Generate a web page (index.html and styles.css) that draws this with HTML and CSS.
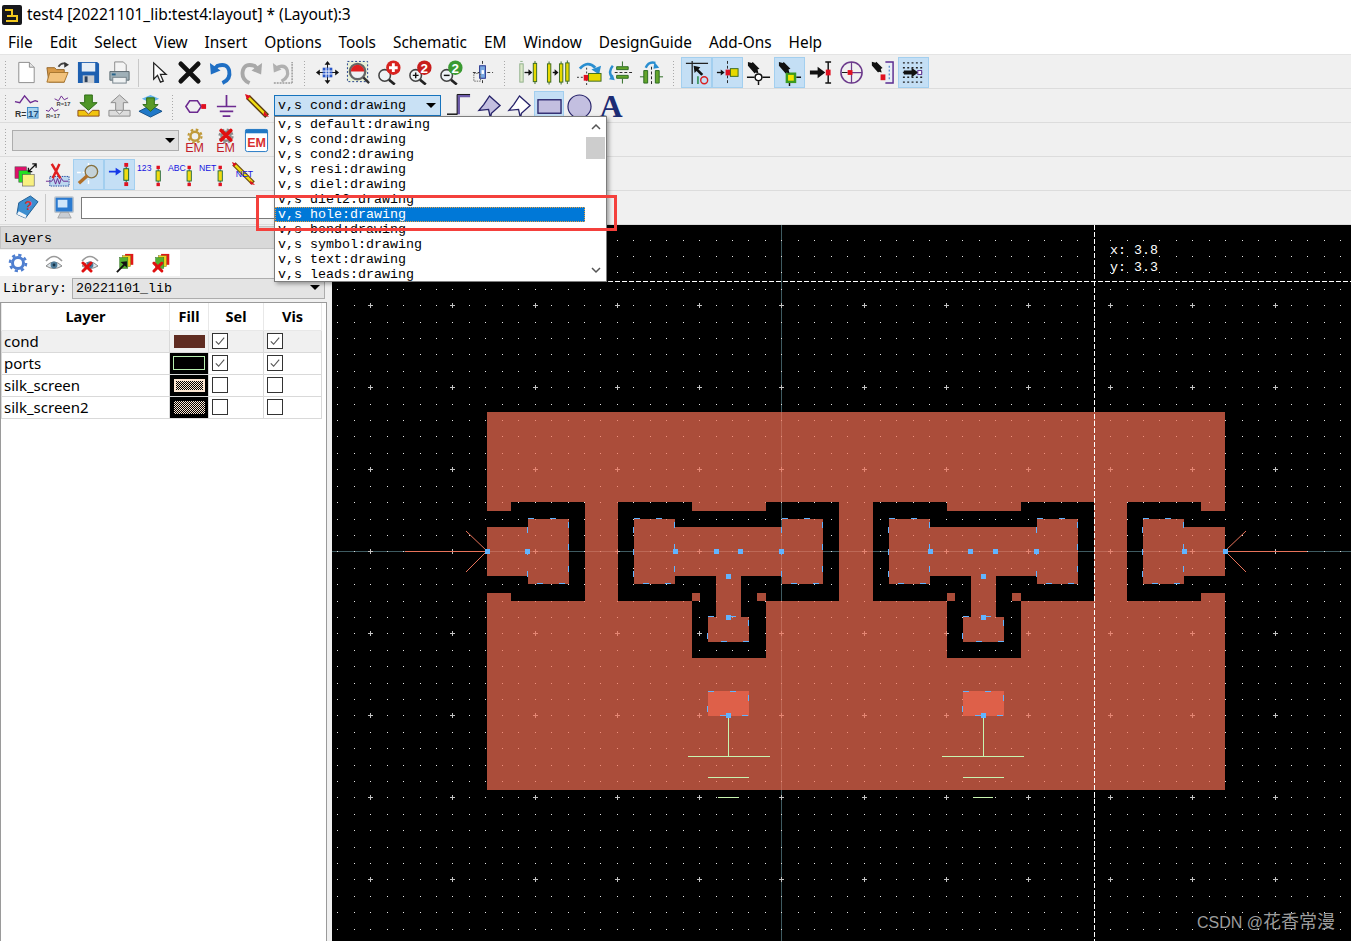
FILE: index.html
```html
<!DOCTYPE html>
<html lang="en">
<head>
<meta charset="utf-8">
<title>test4 layout</title>
<link rel="stylesheet" href="styles.css">
</head>
<body>
<svg class="defs" width="0" height="0" aria-hidden="true">
  <defs>
    <symbol id="mag" viewBox="0 0 26 26"><circle cx="8" cy="16" r="6" fill="#eef3f6" stroke="#444" stroke-width="1.600"/><path d="M12.500 20.500l6 5" stroke="#222" stroke-width="2.800"/></symbol>
    <symbol id="rpin" viewBox="0 0 10 26"><rect x="3" y="1" width="4" height="4" fill="#e01020"/><rect x="3" y="21" width="4" height="4" fill="#e01020"/><rect x="2.500" y="7" width="5" height="12" fill="#f0dc10" stroke="#17603a"/><path d="M5 5v2M5 19v2" stroke="#17603a"/></symbol>
    <symbol id="gear" viewBox="0 0 20 20"><circle cx="10" cy="10" r="5.500" fill="none" stroke="currentColor" stroke-width="3"/><circle cx="10" cy="10" r="8" fill="none" stroke="currentColor" stroke-width="2.600" stroke-dasharray="3.200 3.080"/></symbol>
    <symbol id="blackarrow" viewBox="0 0 14 14"><path d="M1 1l4 1 1-1 7 7-2 1 1 4-3-1-1 1-7-8z" fill="#111"/></symbol>
    <symbol id="stack" viewBox="0 0 22 22"><rect x="10" y="1" width="9" height="12" fill="#e01818"/><rect x="7" y="3" width="9" height="12" fill="#f0d020" stroke="#7a7a20" stroke-width=".5"/><rect x="4" y="5" width="9" height="12" fill="#52b030" stroke="#2a6a20" stroke-width=".5"/></symbol>
    <symbol id="eye" viewBox="0 0 20 20"><path d="M2 8q8-9 16 0" fill="none" stroke="#9a9a9a" stroke-width="1.600"/><path d="M2 13q8-8 16 0q-8 5-16 0z" fill="#dfe6ea" stroke="#8a8a8a"/><circle cx="10" cy="12" r="3.400" fill="#4f7d9c"/><circle cx="10" cy="12" r="1.400" fill="#17354a"/></symbol>
    <symbol id="redx" viewBox="0 0 12 12"><path d="M2 2l8 8M10 2l-8 8" stroke="#e01010" stroke-width="3" stroke-linecap="round"/></symbol>
  </defs>
</svg>

<header class="titlebar">
  <svg class="appicon" width="20" height="20" viewBox="0 0 20 20"><rect width="20" height="20" rx="2" fill="#17181c"/><path d="M3 5h7v5M5 11h10v5H4" fill="none" stroke="#f2c81e" stroke-width="2"/></svg>
  <span class="titletext">test4 [20221101_lib:test4:layout] * (Layout):3</span>
</header>

<nav class="menubar">
  <span>File</span><span>Edit</span><span>Select</span><span>View</span><span>Insert</span><span>Options</span><span>Tools</span><span>Schematic</span><span>EM</span><span>Window</span><span>DesignGuide</span><span>Add-Ons</span><span>Help</span>
</nav>

<section class="tb tb-first">
  <i class="grip"></i>
  <b class="btn"><svg viewBox="0 0 26 26"><path d="M5 2.500h11l5 5v16H5z" fill="#fff" stroke="#8d8d8d"/><path d="M16 2.500v5h5" fill="#e4e4e4" stroke="#8d8d8d"/></svg></b>
  <b class="btn"><svg viewBox="0 0 26 26"><path d="M2 8h8l2 2h8v13H4z" fill="#d89a48" stroke="#96672a"/><path d="M2 23l3-10h19l-4 10z" fill="#f2c27c" stroke="#a8762f"/><path d="M14 7q3-5 8-3" fill="none" stroke="#444" stroke-width="1.800"/><path d="M25 5l-5 3 0-6z" fill="#333"/></svg></b>
  <b class="btn"><svg viewBox="0 0 26 26"><path d="M2 2h20l2 2v20H2z" fill="#1d5fb0"/><rect x="6" y="3" width="14" height="9" fill="#e6eef6"/><rect x="7" y="16" width="12" height="8" fill="#c9ccd0"/><rect x="9" y="17" width="3" height="6" fill="#2b3f5c"/></svg></b>
  <b class="btn"><svg viewBox="0 0 26 26"><path d="M8 2h9l3 3v8H8z" fill="#f4f4f4" stroke="#8a8a8a"/><path d="M3 12h20v9H3z" fill="#9fb0b8" stroke="#5d6b72"/><rect x="6" y="18" width="14" height="6" fill="#eef1f2" stroke="#75828a"/><path d="M5 15h4" stroke="#28648a" stroke-width="2"/></svg></b>
  <i class="sep"></i>
  <b class="btn"><svg viewBox="0 0 26 26"><path d="M8 3v17l4-4 3 7 3-1-3-7h6z" fill="#fff" stroke="#222" stroke-width="1.300"/></svg></b>
  <b class="btn"><svg viewBox="0 0 26 26"><path d="M4 4l18 18M22 4L4 22" stroke="#111" stroke-width="5" stroke-linecap="round"/></svg></b>
  <b class="btn"><svg viewBox="0 0 26 26"><path d="M15 24q9-4 7-13-2-8-12-5l-3 3" fill="none" stroke="#1f6fc4" stroke-width="4"/><path d="M2 3l1 12 10-4z" fill="#1f6fc4"/></svg></b>
  <b class="btn"><svg viewBox="0 0 26 26"><path d="M11 24q-9-4-7-13 2-8 12-5l3 3" fill="none" stroke="#a8a8a8" stroke-width="4"/><path d="M24 3l-1 12-10-4z" fill="#a8a8a8"/></svg></b>
  <b class="btn"><svg viewBox="0 0 26 26"><path d="M4 24h19M23 24V2" stroke="#999" stroke-width="1.500" stroke-dasharray="2 1"/><path d="M12 22q8-4 6-11-2-6-9-4l-2 2" fill="none" stroke="#b0b0b0" stroke-width="3.400"/><path d="M3 3l1 10 8-3z" fill="#b0b0b0"/></svg></b>
  <i class="grip wide"></i>
  <b class="btn"><svg viewBox="0 0 26 26"><path d="M13 1l3 4h-6zM13 25l3-4h-6zM1 13l4-3v6zM25 13l-4-3v6z" fill="#111"/><path d="M13 4v18M4 13h18" stroke="#111"/><rect x="8" y="8" width="10" height="10" fill="#2a57c8"/><path d="M11.500 8v10M14.500 8v10M8 11.500h10M8 14.500h10" stroke="#fff"/></svg></b>
  <b class="btn"><svg viewBox="0 0 26 26"><rect x="1.500" y="1.500" width="21" height="21" fill="#e8efd8" stroke="#23408c" stroke-dasharray="2 2"/><circle cx="12" cy="12" r="8" fill="#eef1f3" stroke="#666" stroke-width="2.400"/><path d="M12 5v7H5a7 7 0 0 1 7-7zM12 5a7 7 0 0 1 7 7h-7z" fill="#e02020"/><path d="M18 18l6 6" stroke="#333" stroke-width="2.500"/></svg></b>
  <b class="btn"><svg viewBox="0 0 26 26"><use href="#mag" width="26" height="26"/><circle cx="17" cy="8" r="7.500" fill="#d8221f"/><path d="M17 3.500v9M12.500 8h9" stroke="#fff" stroke-width="3"/></svg></b>
  <b class="btn"><svg viewBox="0 0 26 26"><use href="#mag" width="26" height="26"/><path d="M5 16h6M8 13v6" stroke="#111" stroke-width="1.500"/><circle cx="17" cy="8" r="7.500" fill="#c81c1c"/><text class="ico-num" x="17" y="13">2</text></svg></b>
  <b class="btn"><svg viewBox="0 0 26 26"><use href="#mag" width="26" height="26"/><path d="M5 16h6" stroke="#111" stroke-width="1.500"/><circle cx="17" cy="8" r="7.500" fill="#3a9a32"/><text class="ico-num" x="17" y="13">2</text></svg></b>
  <b class="btn"><svg viewBox="0 0 26 26"><path d="M13 1v24M3 13h21" stroke="#333" stroke-dasharray="3 2"/><rect x="10" y="6" width="6" height="13" fill="#7aa8e0" stroke="#22308c"/><rect x="12" y="10.500" width="2.500" height="4" fill="#fff"/><rect x="4" y="14" width="7" height="8" fill="none" stroke="#666" stroke-dasharray="1.500 1"/></svg></b>
  <i class="grip wide"></i>
  <b class="btn"><svg viewBox="0 0 26 26"><rect x="5" y="4" width="3.500" height="19" fill="#dce8c8" stroke="#8fb08a"/><path d="M5.500 1.500h2.500M10 13h5" stroke="#8fb08a"/><path d="M10 13h6" stroke="#111" stroke-width="1.400"/><path d="M18 13l-4-3.500v7z" fill="#111"/><rect x="19" y="3.500" width="3.500" height="19" fill="#e7d900" stroke="#3a6a20"/><path d="M20.800 1v2.500M20.800 22.500V25" stroke="#3a6a20"/></svg></b>
  <b class="btn"><svg viewBox="0 0 26 26"><rect x="1.500" y="4" width="3.500" height="19" fill="#e7d900" stroke="#3a6a20"/><path d="M7 13h4" stroke="#111" stroke-width="1.400"/><path d="M13 13l-4-3.500v7z" fill="#111"/><rect x="14" y="4" width="3.500" height="19" fill="#e7d900" stroke="#3a6a20"/><rect x="20.500" y="3" width="3.500" height="19" fill="#e7d900" stroke="#3a6a20"/><path d="M3.200 1.500V4M15.700 1.500V4M22.200 .5V3M3.200 23v2.500M15.700 23v2.500M22.200 22v3" stroke="#3a6a20"/></svg></b>
  <b class="btn"><svg viewBox="0 0 26 26"><path d="M3 9q8-9 16-1" fill="none" stroke="#2a8ed0" stroke-width="3"/><path d="M25 6l-2 9-8-5z" fill="#2a8ed0"/><path d="M10 8v18M0 18h6" stroke="#333" stroke-dasharray="2 2"/><rect x="7" y="15.500" width="5" height="6" fill="#e01020"/><rect x="12" y="14" width="13" height="8" fill="#e7d900" stroke="#3a6a20"/></svg></b>
  <b class="btn"><svg viewBox="0 0 26 26"><path d="M5 6q-5 6-1 12" fill="none" stroke="#2a8ed0" stroke-width="2.600"/><path d="M7 21l-6-1 4-5z" fill="#2a8ed0"/><path d="M7 13h18" stroke="#222" stroke-dasharray="3 2"/><path d="M15 1.500V6.500M9 7h12v3H9zM15 24.500V19.500M9 16h12v3H9z" fill="#63a52a" stroke="#2a6a20"/></svg></b>
  <b class="btn"><svg viewBox="0 0 26 26"><path d="M7 8q3-7 10-5" fill="none" stroke="#2a8ed0" stroke-width="2.600"/><path d="M21 8l-6 1 1-7z" fill="#2a8ed0"/><path d="M13 7v19" stroke="#222" stroke-dasharray="3 2"/><path d="M5 11h4v13H5zM17 11h4v13h-4zM1 17.500h4M21 17.500h4" fill="#63a52a" stroke="#2a6a20"/></svg></b>
  <i class="grip wide"></i>
  <b class="btn on"><svg viewBox="0 0 26 26"><path d="M2 3.500h23M8.500 1v24" stroke="#222" stroke-width="1.300"/><path d="M10 6l7 1.500-2 2 5 5-2 2-5-5-2 2z" fill="#111"/><path d="M14.500 17v8" stroke="#2a8a4a" stroke-width="1.600"/><circle cx="21" cy="21" r="3.600" fill="none" stroke="#d82020" stroke-width="1.500"/></svg></b>
  <b class="btn on"><svg viewBox="0 0 26 26"><path d="M2 13h6" stroke="#111" stroke-width="1.400"/><path d="M10 13l-4-3v6z" fill="#111"/><path d="M13 1v24" stroke="#222" stroke-dasharray="3 2"/><rect x="11" y="10" width="5" height="6" fill="#e01020"/><rect x="16" y="9" width="8" height="8" fill="#e7d900" stroke="#3a6a20"/></svg></b>
  <b class="btn"><svg viewBox="0 0 26 26"><use href="#blackarrow" width="14" height="14" x="1" y="1"/><path d="M1 18h8M17 18h8M13 22v4" stroke="#111" stroke-width="1.500"/><circle cx="13" cy="18" r="3.500" fill="#fff" stroke="#111" stroke-width="1.500"/></svg></b>
  <b class="btn on"><svg viewBox="0 0 26 26"><path d="M13 24v3M20 18h5" stroke="#111" stroke-width="1.500"/><rect x="9" y="13" width="11" height="11" fill="#3a9a20"/><rect x="11.500" y="15.500" width="6" height="6" fill="#f2e400"/><use href="#blackarrow" width="14" height="14" x="1" y="1"/></svg></b>
  <b class="btn"><svg viewBox="0 0 26 26"><path d="M18 2h6M21 2v22M18 24h6" stroke="#111" stroke-width="1.500"/><path d="M2 11h8V7l8 6-8 6v-4H2z" fill="#111"/><rect x="18.500" y="10" width="5" height="6" fill="#e01020"/></svg></b>
  <b class="btn"><svg viewBox="0 0 26 26"><circle cx="13" cy="13" r="11" fill="none" stroke="#6c3a8c" stroke-width="1.600"/><path d="M13 2v22M13 13h11" stroke="#6c3a8c" stroke-width="1.300"/><path d="M3 13h6" stroke="#111"/><rect x="9" y="10.500" width="5" height="5" fill="#e01020"/></svg></b>
  <b class="btn"><svg viewBox="0 0 26 26"><use href="#blackarrow" width="13" height="13" x="1" y="1"/><rect x="11" y="15" width="6" height="6" fill="#e01020"/><path d="M16 2h8v22h-8" fill="#e9eef6" stroke="#5a2a90" stroke-width="1.500"/><path d="M20 6v14" stroke="#2a6ac0" stroke-dasharray="2 2"/></svg></b>
  <b class="btn on"><svg viewBox="0 0 26 26"><path d="M2 3h22M2 8h22M2 18h22M2 23h22" stroke="#222" stroke-width="1.500" stroke-dasharray="2 2.500"/><path d="M2 13h6M20 13h4" stroke="#222" stroke-width="1.500" stroke-dasharray="2 2.500"/><path d="M3 11h8V8l7 5-7 5v-3H3z" fill="#111"/><rect x="17.500" y="11" width="4" height="4" fill="#fff" stroke="#5a2a90"/></svg></b>
</section>

<section class="tb">
  <i class="grip"></i>
  <b class="btn"><svg viewBox="0 0 26 26"><path d="M1 8l5 1 5-7 6 7 5-2 3 1" fill="none" stroke="#6c2a90" stroke-width="1.400"/><rect x="14" y="14" width="11" height="11" fill="#a8d4f0" stroke="#3a86c6"/><text class="ico-r" x="1" y="24">R=</text><text class="ico-r17" x="14.500" y="24">17</text></svg></b>
  <b class="btn"><svg viewBox="0 0 26 26"><path d="M10 5l4 2 3-5 3 4 4-2" fill="none" stroke="#6c2a90"/><path d="M1 17l3 1 3-4 3 4 4-2" fill="none" stroke="#6c2a90"/><text class="ico-rs" x="12" y="12">R=17</text><text class="ico-rs" x="1" y="25">R=17</text></svg></b>
  <b class="btn"><svg viewBox="0 0 26 26"><path d="M9 1h8v8h5l-9 8-9-8h5z" fill="#4f9628" stroke="#2c6a14"/><path d="M2 17h7l4 4 4-4h7v6H2z" fill="#f1c40f" stroke="#8a4a18"/></svg></b>
  <b class="btn"><svg viewBox="0 0 26 26"><path d="M13 1l9 8h-5v8H9V9H4z" fill="#d2d2d2" stroke="#8a8a8a"/><path d="M2 17h7l4 4 4-4h7v6H2z" fill="#dcdcdc" stroke="#8a8a8a"/></svg></b>
  <b class="btn"><svg viewBox="0 0 26 26"><path d="M13 12l12 6-12 6-12-6z" fill="#1f78c8" stroke="#134f88"/><path d="M13 1l9 4-9 4-9-4z" fill="#62b4ee"/><path d="M9 4h8v7h4l-8 7-8-7h4z" fill="#5a9a28" stroke="#2c6a14"/></svg></b>
  <i class="grip wide"></i>
  <b class="btn"><svg viewBox="0 0 26 26"><path d="M3 13l4-6h8l4 6-4 6H7z" fill="none" stroke="#6c2a90" stroke-width="1.600"/><rect x="19" y="10.500" width="5" height="5" fill="#e01020"/></svg></b>
  <b class="btn"><svg viewBox="0 0 26 26"><path d="M13 1v12M3 13h20M6 18h14M9 23h8" stroke="#6c2a90" stroke-width="1.800"/></svg></b>
  <b class="btn"><svg viewBox="0 0 26 26"><path d="M3 3l20 20" stroke="#5a3a10" stroke-width="5.500"/><path d="M4 4l18 18" stroke="#f0dc10" stroke-width="2.600"/><path d="M0 0l6 2-4 4zM20 18l5 6-6-2z" fill="#e01020"/></svg></b>
  <div class="combo combo-layer"><span>v,s cond:drawing</span><i class="caret"></i></div>
  <b class="btn narrow"><svg viewBox="0 0 26 26"><path d="M0 21h11" fill="none" stroke="#111" stroke-width="1.500"/><path d="M12 21V2h12" fill="none" stroke="#6c5aa8" stroke-width="3"/><path d="M10.500 21V.5H24" fill="none" stroke="#111"/></svg></b>
  <b class="btn narrow"><svg viewBox="0 0 26 26"><path d="M13 2l11 10-9 8-1 5-2-9-10 1 5-6z" fill="#c3bfe0" stroke="#27236a" stroke-width="1.400"/></svg></b>
  <b class="btn narrow"><svg viewBox="0 0 26 26"><path d="M13 2l11 10-9 8-1 5-2-9-10 1 5-6z" fill="#fff" stroke="#27236a" stroke-width="1.400"/></svg></b>
  <b class="btn narrow on"><svg viewBox="0 0 26 26"><rect x="1" y="6" width="24" height="14" fill="#c3bfe0" stroke="#27236a" stroke-width="1.400"/></svg></b>
  <b class="btn narrow"><svg viewBox="0 0 26 26"><circle cx="13" cy="13" r="12" fill="#c3bfe0" stroke="#27236a" stroke-width="1.200"/></svg></b>
  <b class="btn narrow"><span class="bigA">A</span></b>
</section>

<section class="tb">
  <i class="grip"></i>
  <div class="combo combo-sub"><i class="caret"></i></div>
  <b class="btn"><svg viewBox="0 0 26 26"><use href="#gear" width="17" height="17" x="5" y="0" color="#c09a3a"/><text class="ico-em" x="13" y="25">EM</text></svg></b>
  <b class="btn"><svg viewBox="0 0 26 26"><use href="#gear" width="17" height="17" x="5" y="0" color="#8a8a8a"/><use href="#redx" width="15" height="15" x="6" y="0"/><text class="ico-em" x="13" y="25">EM</text></svg></b>
  <b class="btn"><svg viewBox="0 0 26 26"><rect x="1.500" y="1.500" width="23" height="23" rx="2" fill="#fff" stroke="#2278c4"/><rect x="1.500" y="1.500" width="23" height="4" fill="#2278c4"/><text class="ico-em2" x="13" y="20">EM</text></svg></b>
</section>

<section class="tb">
  <i class="grip"></i>
  <b class="btn"><svg viewBox="0 0 26 26"><rect x="1" y="5" width="12" height="12" fill="#e0106a" stroke="#555" stroke-width=".6"/><rect x="5" y="9" width="12" height="12" fill="#20e020" stroke="#555" stroke-width=".6"/><rect x="9" y="13" width="12" height="12" fill="#f8f080" stroke="#555" stroke-width=".6"/><path d="M15 10l8-8M19 2h4v4M15 6v4h4" fill="none" stroke="#111" stroke-width="1.400"/></svg></b>
  <b class="btn"><svg viewBox="0 0 26 26"><rect x="5" y="15" width="20" height="10" fill="#bcd8f0" stroke="#224a9c" stroke-dasharray="1.500 1"/><path d="M1 20h6l2-3 2 6 2-6 2 6 2-6 2 3h5" fill="none" stroke="#6c2a90"/><path d="M7 2l9 15M15 2l-7 15" stroke="#e02020" stroke-width="2.600"/></svg></b>
  <b class="btn on"><svg viewBox="0 0 26 26"><path d="M13 1v24M1 11h24" stroke="#fff" stroke-width="1.500" stroke-dasharray="4 2"/><circle cx="16" cy="10" r="6.500" fill="#c4d2d8" stroke="#85703f" stroke-width="1.400"/><path d="M12 14l-9 8" stroke="#b0702a" stroke-width="3.500"/></svg></b>
  <b class="btn on"><svg viewBox="0 0 26 26"><path d="M2 9h7V6l6 4-6 4v-3H2z" fill="#1438e8"/><use href="#rpin" width="10" height="26" x="15" y="0"/></svg></b>
  <b class="btn"><svg viewBox="0 0 26 26"><text class="ico-lbl" x="-1" y="9">123</text><use href="#rpin" width="10" height="23" x="16" y="3"/></svg></b>
  <b class="btn"><svg viewBox="0 0 26 26"><text class="ico-lbl" x="-1" y="9">ABC</text><use href="#rpin" width="10" height="23" x="16" y="3"/></svg></b>
  <b class="btn"><svg viewBox="0 0 26 26"><text class="ico-lbl" x="-1" y="9">NET</text><use href="#rpin" width="10" height="23" x="16" y="3"/></svg></b>
  <b class="btn"><svg viewBox="0 0 26 26"><path d="M3 2l20 20" stroke="#6b4a10" stroke-width="5"/><path d="M4 3l18 18" stroke="#f0dc10" stroke-width="2.500"/><path d="M1 0l5 2-3 3zM20 19l5 5-5-1z" fill="#e01020"/><text class="ico-lbl" x="5" y="16">NET</text></svg></b>
</section>

<section class="tb tb-last">
  <i class="grip"></i>
  <b class="btn"><svg viewBox="0 0 26 26"><path d="M5 8L17 1l8 6-13 17-9-4z" fill="#3c8ed0" stroke="#1f5c92"/><path d="M3 20l9 4 1-3-8-4z" fill="#f0f4f8"/><text class="ico-q" x="15" y="16">?</text></svg></b>
  <i class="sep short"></i>
  <b class="btn"><svg viewBox="0 0 26 26"><rect x="3" y="2" width="19" height="16" rx="1" fill="#2a7ad0" stroke="#bcc4cc" stroke-width="1.600"/><rect x="6" y="5" width="10" height="8" fill="#cfe6fa"/><path d="M9 18h8l3 6H6z" fill="#c8ccd2" stroke="#888" stroke-width=".6"/></svg></b>
  <input class="cmd" type="text" aria-label="Command">
</section>

<div class="workspace">
  <aside class="layers">
    <div class="dock-title">Layers</div>
    <div class="dock-tools">
      <svg class="dt" viewBox="0 0 20 20" color="#4f7fd0"><use href="#gear" width="20" height="20"/></svg>
      <svg class="dt" viewBox="0 0 20 20"><use href="#eye" width="20" height="20"/></svg>
      <svg class="dt" viewBox="0 0 20 20"><use href="#eye" width="20" height="20"/><use href="#redx" width="12" height="12" x="1" y="8"/></svg>
      <svg class="dt" viewBox="0 0 22 22"><use href="#stack" width="22" height="22"/><path d="M1 21l9-9" stroke="#111" stroke-width="2"/><path d="M12 9l0 7-7-6z" fill="#111"/></svg>
      <svg class="dt" viewBox="0 0 22 22"><use href="#stack" width="22" height="22"/><use href="#redx" width="13" height="13" x="0" y="9"/></svg>
    </div>
    <div class="library">
      <label>Library:</label>
      <div class="combo combo-lib"><span>20221101_lib</span><i class="caret"></i></div>
    </div>
    <div class="tablewrap">
      <table class="ltable">
        <thead><tr><th class="c-layer">Layer</th><th class="c-fill">Fill</th><th class="c-sel">Sel</th><th class="c-vis">Vis</th></tr></thead>
        <tbody>
          <tr class="alt"><td>cond</td><td class="fillcell"><i class="swatch s-cond"></i></td><td class="chk"><i class="box"><svg viewBox="0 0 15 15"><path d="M3 8l3 3 6-7" fill="none" stroke="#555" stroke-width="1.200"/></svg></i></td><td class="chk"><i class="box"><svg viewBox="0 0 15 15"><path d="M3 8l3 3 6-7" fill="none" stroke="#555" stroke-width="1.200"/></svg></i></td></tr>
          <tr><td>ports</td><td class="fillcell"><i class="swatch s-ports"></i></td><td class="chk"><i class="box"><svg viewBox="0 0 15 15"><path d="M3 8l3 3 6-7" fill="none" stroke="#555" stroke-width="1.200"/></svg></i></td><td class="chk"><i class="box"><svg viewBox="0 0 15 15"><path d="M3 8l3 3 6-7" fill="none" stroke="#555" stroke-width="1.200"/></svg></i></td></tr>
          <tr><td>silk_screen</td><td class="fillcell"><i class="swatch s-silk"></i></td><td class="chk"><i class="box"></i></td><td class="chk"><i class="box"></i></td></tr>
          <tr><td>silk_screen2</td><td class="fillcell"><i class="swatch s-silk2"></i></td><td class="chk"><i class="box"></i></td><td class="chk"><i class="box"></i></td></tr>
        </tbody>
      </table>
    </div>
  </aside>

  <main class="canvas">
    <svg class="board" width="1019" height="716" viewBox="332 225 1019 716" shape-rendering="crispEdges">
      <path d="M332 551.500H1351M781.500 225V941" stroke="#3e5a60" fill="none"/>
      <path id="dots" fill="#e4e4e4"/>
      <path id="pluses" stroke="#c4c4c4" fill="none"/>
      <path class="metal" fill-rule="evenodd" d="M487 412H1225V790H487Z
        M487 511H511V502H585V601H511V593H487Z
        M487 527H528V519H569V584H528V576H487Z
        M618 502H692V511H766V502H839V601H766V658H692V601H618Z
        M692 593H700V601H692Z M757 593H766V601H757Z
        M634 519H675V527H782V519H823V584H782V576H741V617H749V642H708V617H716V576H675V584H634Z
        M873 502H947V511H1021V502H1094V601H1021V658H947V601H873Z
        M947 593H955V601H947Z M1012 593H1021V601H1012Z
        M889 519H930V527H1037V519H1078V584H1037V576H996V617H1004V642H963V617H971V576H930V584H889Z
        M1225 511H1201V502H1127V601H1201V593H1225Z
        M1225 527H1184V519H1143V584H1184V576H1225Z"/>
      <rect class="padfill" x="708" y="691" width="41" height="25"/>
      <rect class="padfill" x="963" y="691" width="41" height="25"/>
      <g class="lead">
        <path d="M728.500 716V756M688 756.500H770M708 777.500H749M718 797.500H739M983.500 716V756M942 756.500H1024M963 777.500H1004M973 797.500H993"/>
      </g>
      <g class="port">
        <path d="M405 551.500H487M1225 551.500H1307"/>
        <path shape-rendering="auto" d="M487 551L466 531M487 551L466 572M1225 551L1246 531M1225 551L1246 572"/>
      </g>
      <g class="dash">
        <rect x="527.500" y="518.500" width="41" height="65"/>
        <rect x="633.500" y="518.500" width="41" height="65"/>
        <rect x="781.500" y="518.500" width="41" height="65"/>
        <rect x="707.500" y="616.500" width="41" height="25"/>
        <rect x="888.500" y="518.500" width="41" height="65"/>
        <rect x="1036.500" y="518.500" width="41" height="65"/>
        <rect x="962.500" y="616.500" width="41" height="25"/>
        <rect x="1142.500" y="518.500" width="41" height="65"/>
        <rect x="707.500" y="691.500" width="41" height="24"/>
        <rect x="962.500" y="691.500" width="41" height="24"/>
      </g>
      <path class="handles" d="M485 549h5v5h-5z M525 549h5v5h-5z M673 549h5v5h-5z M714 549h5v5h-5z M738 549h5v5h-5z M779 549h5v5h-5z M726 574h5v5h-5z M726 615h5v5h-5z M726 713h5v5h-5z
        M928 549h5v5h-5z M968 549h5v5h-5z M993 549h5v5h-5z M1034 549h5v5h-5z M981 574h5v5h-5z M981 615h5v5h-5z M981 713h5v5h-5z M1182 549h5v5h-5z M1223 549h5v5h-5z"/>
      <path class="cursor" d="M1094.500 225V941M608 281.500H1351"/>
      <text class="coord" x="1110" y="254">x: 3.8</text>
      <text class="coord" x="1110" y="271">y: 3.3</text>
    </svg>
    <div class="watermark">CSDN @<span class="wm-cjk">花香常漫</span></div>
  </main>
</div>

<div class="popup">
  <ul class="plist">
    <li>v,s default:drawing</li>
    <li>v,s cond:drawing</li>
    <li>v,s cond2:drawing</li>
    <li>v,s resi:drawing</li>
    <li>v,s diel:drawing</li>
    <li>v,s diel2:drawing</li>
    <li class="sel">v,s hole:drawing</li>
    <li>v,s bond:drawing</li>
    <li>v,s symbol:drawing</li>
    <li>v,s text:drawing</li>
    <li>v,s leads:drawing</li>
  </ul>
  <div class="sbar">
    <svg class="chev" viewBox="0 0 12 8"><path d="M2 6l4-4 4 4" fill="none" stroke="#555" stroke-width="1.500"/></svg>
    <div class="thumb"></div>
    <svg class="chev chev-down" viewBox="0 0 12 8"><path d="M2 2l4 4 4-4" fill="none" stroke="#555" stroke-width="1.500"/></svg>
  </div>
</div>
<div class="redbox"></div>
<script src="grid.js"></script>
</body>
</html>
```
FILE: styles.css
```css
* { box-sizing: border-box; }
html, body { margin: 0; padding: 0; }
body {
  width: 1351px; height: 941px; overflow: hidden; position: relative;
  background: #f0f0f0; color: #000;
  font-family: "Noto Sans", "Liberation Sans", sans-serif;
  display: flex; flex-direction: column;
}
.defs { position: absolute; }
.titlebar { height: 28px; background: #fff; display: flex; align-items: center; padding: 1px 0 0 2px; gap: 5px; }
.titletext { font-size: 15.5px; line-height: 20px; position: relative; top: -1px; }
.menubar { height: 26px; background: #fff; display: flex; align-items: center; gap: 17px; padding: 2px 0 0 8px; font-size: 15.4px; }

.tb { height: 34px; background: #f0f0f0; border-bottom: 1px solid #dcdcdc; display: flex; align-items: center; flex: none; padding-top: 2px; }
.tb-first { height: 35px; border-top: 1px solid #e4e4e4; }
.tb-last { padding-top: 0; }
.grip { display: block; width: 11px; height: 26px; flex: none;
  background: radial-gradient(circle, #a9a9a9 0 .8px, transparent 1px) 4px 0 / 3px 3px repeat-y; }
.grip.wide { width: 14px; background-position: 5px 0; }
.sep { display: block; width: 8px; height: 28px; flex: none; position: relative; }
.sep::after { content: ""; position: absolute; left: 3px; top: 0; bottom: 0; width: 1px; background: #c8c8c8; }
.sep.short { width: 7px; }
.btn { display: flex; width: 31px; height: 31px; flex: none; align-items: center; justify-content: center; border: 1px solid transparent; }
.btn svg { width: 25px; height: 25px; display: block; overflow: visible; }
.btn.on { background: #c4dff5; border-color: #a3cfef; }
.btn.narrow { width: 30px; }
.bigA { font: bold 32px/31px "Liberation Serif", serif; color: #1c2c74; margin-left: 4px; }
.ico-num { font: bold 14px "Liberation Sans", sans-serif; fill: #fff; text-anchor: middle; }
.ico-r { font: bold 9px "Liberation Sans", sans-serif; fill: #333; }
.ico-r17 { font: bold 10px "Liberation Sans", sans-serif; fill: #1f4f80; }
.ico-rs { font: bold 6px "Liberation Sans", sans-serif; fill: #444; }
.ico-em { font: 13px "Liberation Sans", sans-serif; fill: #c0202a; text-anchor: middle; }
.ico-em2 { font: bold 13px "Liberation Sans", sans-serif; fill: #d83030; text-anchor: middle; }
.ico-lbl { font: 9px "Liberation Sans", sans-serif; fill: #1414e0; }
.ico-q { font: bold 13px "Liberation Sans", sans-serif; fill: #e03030; text-anchor: middle; }

.combo { display: flex; align-items: center; position: relative; font: 13.33px "Liberation Mono", monospace; flex: none; }
.combo .caret { position: absolute; width: 0; height: 0; border-left: 5px solid transparent; border-right: 5px solid transparent; border-top: 5px solid #000; }
.combo-layer { width: 167px; height: 21px; background: #c9e1f5; border: 1px solid #1673bd; padding-left: 3px; align-self: flex-start; margin: 4px 3px 0 1px; }
.combo-layer .caret { right: 4px; top: 7px; }
.combo-sub { width: 167px; height: 21px; margin: 0 0 0 1px; background: #e1e1e1; border: 1px solid #adadad; }
.combo-sub .caret { right: 3px; top: 7px; }
.combo-lib { width: 253px; height: 21px; background: #e4e4e4; border: 1px solid #adadad; padding-left: 3px; margin-left: 5px; }
.combo-lib .caret { right: 4px; top: 6px; }
.cmd { width: 400px; height: 22px; margin-left: 1px; background: #fff; border: 1px solid #7a7a7a; padding: 0; }

.workspace { flex: 1; display: flex; min-height: 0; }
.layers { width: 328px; flex: none; display: flex; flex-direction: column; }
.dock-title { height: 23px; background: #d9d9d9; border: 1px solid #c4c4c4; font: 13.33px/24px "Liberation Mono", monospace; padding-left: 3px; margin-top: 1px; }
.dock-tools { height: 26px; margin-top: 1px; background: #fff; display: flex; align-items: center; width: 180px; padding-left: 8px; gap: 16px; }
.dt { width: 20px; height: 20px; display: block; flex: none; overflow: visible; }
.library { height: 25px; display: flex; align-items: center; padding-left: 3px; font: 13.33px "Liberation Mono", monospace; }
.tablewrap { flex: 1; background: #fff; border: 1px solid #9a9a9a; margin-right: 1px; margin-top: 1px; border-bottom: 0; }
.ltable { border-collapse: collapse; table-layout: fixed; width: 320px; font-size: 15px; }
.ltable th { height: 27px; font-size: 14.5px; font-weight: 700; padding: 0; border: 1px solid #e8e8e8; border-top: 0; text-align: center; }
.c-layer { width: 168px; } .c-fill { width: 39px; } .c-sel { width: 55px; } .c-vis { width: 58px; }
.ltable td { height: 22px; padding: 0 0 0 2px; border: 1px solid #d9d9d9; line-height: 20px; }
.ltable tr.alt td { background: #f0f0f0; }
.ltable td.fillcell { background: #000; padding: 0; position: relative; }
.swatch { display: block; margin: 0 auto; width: 31px; height: 13px; }
.s-cond { background: #5f2c21; }
.s-ports { background: #000; border: 1px solid #b8f0b0; width: 32px; height: 14px; }
.s-silk { background: repeating-conic-gradient(#fde6d2 0 25%, #000 0 50%) 0 0 / 2px 2px; border: 2px solid #fde6d2; }
.s-silk2 { background: repeating-conic-gradient(#fde6d2 0 25%, #000 0 50%) 0 0 / 2px 2px; }
.ltable td.chk { padding: 0 0 0 3px; }
.box { display: block; width: 16px; height: 16px; border: 1px solid #333; background: #fff; }
.box svg { display: block; width: 14px; height: 14px; }

.canvas { width: 1019px; margin-left: 4px; background: #000; position: relative; overflow: hidden; flex: none; }
.board { display: block; }
.metal { fill: #f46d53; fill-opacity: .7; }
.padfill { fill: #de6049; }
.lead path { stroke: #c8f5b0; fill: none; }
.port path { stroke: #e8735a; fill: none; }
.dash rect { fill: none; stroke: #62b4ff; stroke-dasharray: 6 16; }
.handles { fill: #62b4ff; }
.cursor { stroke: #fff; fill: none; stroke-dasharray: 5 2; }
.coord { font: 13.33px "Liberation Mono", monospace; fill: #fff; }
.watermark { position: absolute; right: 16px; bottom: 7px; font: 16px/22px "Liberation Sans", "Noto Sans CJK SC", sans-serif; color: #9c9c9c; white-space: nowrap; }
.wm-cjk { font: 18px/22px "Noto Sans CJK SC", sans-serif; }

.popup { position: absolute; left: 274px; top: 116px; width: 333px; height: 166px; background: #fff; border: 1px solid #7d7d7d; box-shadow: 2px 2px 4px rgba(0,0,0,.35); display: flex; }
.plist { list-style: none; margin: 0; padding: 0; width: 311px; font: 13.33px/15px "Liberation Mono", monospace; }
.plist li { height: 15px; padding-left: 3px; white-space: pre; }
.plist li.sel { background: #0078d7; color: #fff; outline: 1px dotted #e8a040; outline-offset: -1px; }
.sbar { width: 20px; margin-left: 1px; position: relative; display: flex; flex-direction: column; align-items: center; }
.chev { width: 12px; height: 8px; position: absolute; top: 6px; left: 4px; }
.chev-down { top: 149px; }
.thumb { position: absolute; top: 20px; left: 0; width: 19px; height: 22px; background: #cdcdcd; }
.redbox { position: absolute; left: 256px; top: 195px; width: 361px; height: 36px; border: 3px solid #f4403c; }
```
FILE: grid.js
```js
(function () {
  var x0 = 781.3, y0 = 551.3, sx = 82.2, sy = 82, n = 5;
  var d = "", p = "";
  for (var j = -20; j <= 24; j++) {
    var y = Math.round(y0 + j * sy / n);
    if (y < 225 || y > 941) continue;
    for (var i = -28; i <= 35; i++) {
      var x = Math.round(x0 + i * sx / n);
      if (x < 332 || x > 1351) continue;
      if (i % n === 0 && j % n === 0) {
        p += "M" + (x - 2) + " " + (y + 0.5) + "h5M" + (x + 0.5) + " " + (y - 2) + "v5";
      } else {
        d += "M" + x + " " + y + "h1v1h-1z";
      }
    }
  }
  document.getElementById("dots").setAttribute("d", d);
  document.getElementById("pluses").setAttribute("d", p);
})();
```
